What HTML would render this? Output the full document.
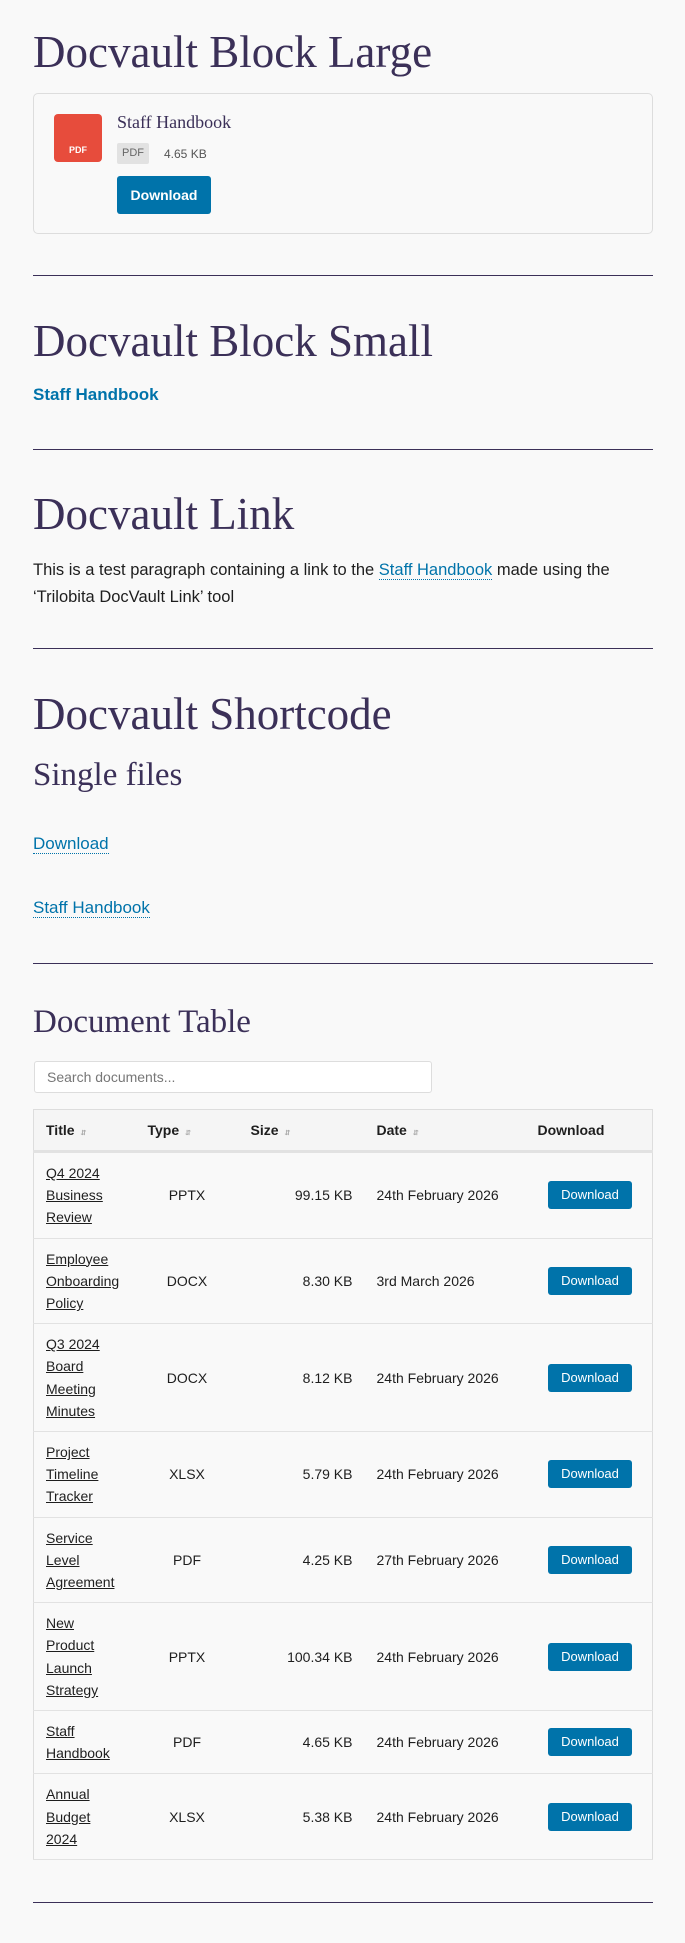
<!DOCTYPE html>
<html><head><meta charset="utf-8"><style>
*{box-sizing:border-box;margin:0;padding:0}
body{width:685px;height:1943px;background:#f9f9f9;position:relative;font-family:"Liberation Sans",sans-serif;color:#1e1e1e;overflow:hidden}
.a{position:absolute}
h1,h2{font-family:"Liberation Serif",serif;font-weight:normal;color:#3b3058;position:absolute;left:33px;white-space:nowrap}
h1{font-size:45px;line-height:50px}
hr{position:absolute;left:33px;width:620px;border:0;border-top:1.5px solid #3b3058}
a{color:#0073aa}
.dl{text-decoration:none;border-bottom:1px dotted #0073aa}
table{border-collapse:collapse;position:absolute;left:33px;top:1109px;width:620px;font-size:14px;border:1px solid #ddd}
th{background:#f5f5f5;text-align:left;font-weight:bold;height:42px;padding:0 12px;border-bottom:3px solid #e2e2e2}
td{padding:9px 12px;line-height:22.2px;border-bottom:1px solid #e2e2e2}
td.t a{color:#1e1e1e;text-decoration:underline}
td.b{text-align:right;padding-right:20px}
.s{font-size:7px;color:#aaa;margin-left:6px}
.btn{display:inline-block;background:#0073aa;color:#fff;border-radius:3px;font-size:13px;width:84px;height:28px;line-height:28px;text-align:center}
</style></head><body>
<h1 style="top:27px">Docvault Block Large</h1>
<div class="a" style="left:33px;top:93px;width:620px;height:141px;border:1px solid #ddd;border-radius:5px"></div>
<div class="a" style="left:54px;top:114px;width:48px;height:48px;background:#e74c3c;border-radius:4px;color:#fff;font-size:9px;font-weight:bold;text-align:center;padding-top:31px">PDF</div>
<div class="a" style="left:117px;top:112px;font-family:'Liberation Serif',serif;font-size:18px;color:#3b3058">Staff Handbook</div>
<div class="a" style="left:117px;top:143px;width:32px;height:21px;background:#e2e2e2;border-radius:2px;font-size:11px;color:#666;text-align:center;line-height:21px">PDF</div>
<div class="a" style="left:164px;top:144px;font-size:12px;color:#555;line-height:20px">4.65 KB</div>
<div class="a" style="left:117px;top:176px;width:94px;height:38px;background:#0073aa;border-radius:3px;color:#fff;font-size:14px;font-weight:bold;text-align:center;line-height:38px">Download</div>
<hr style="top:275px">
<h1 style="top:316px">Docvault Block Small</h1>
<div class="a" style="left:33px;top:385px;font-size:17px;font-weight:bold;color:#0073aa">Staff Handbook</div>
<hr style="top:449px">
<h1 style="top:489px">Docvault Link</h1>
<div class="a" style="left:33px;top:557px;width:620px;font-size:16.5px;line-height:27px">This is a test paragraph containing a link to the <a class="dl">Staff Handbook</a> made using the ‘Trilobita DocVault Link’ tool</div>
<hr style="top:648px">
<h1 style="top:689px">Docvault Shortcode</h1>
<h2 style="top:757px;font-size:33px;line-height:36px">Single files</h2>
<div class="a" style="left:33px;top:834px;font-size:17px"><a class="dl">Download</a></div>
<div class="a" style="left:33px;top:898px;font-size:17px"><a class="dl">Staff Handbook</a></div>
<hr style="top:963px">
<h2 style="top:1004px;font-size:33px;line-height:36px">Document Table</h2>
<div class="a" style="left:34px;top:1061px;width:398px;height:32px;background:#fff;border:1px solid #ddd;border-radius:3px;font-size:14px;color:#777;padding-left:12px;line-height:30px">Search documents...</div>
<table>
<tr><th style="width:102px">Title<span class="s">⇵</span></th><th style="width:103px">Type<span class="s">⇵</span></th><th style="width:126px">Size<span class="s">⇵</span></th><th style="width:150px">Date<span class="s">⇵</span></th><th style="padding-left:23px">Download</th></tr>
<tr><td class="t"><a>Q4 2024 Business Review</a></td><td align="center">PPTX</td><td align="right">99.15 KB</td><td>24th February 2026</td><td class="b"><span class="btn">Download</span></td></tr>
<tr><td class="t"><a>Employee Onboarding Policy</a></td><td align="center">DOCX</td><td align="right">8.30 KB</td><td>3rd March 2026</td><td class="b"><span class="btn">Download</span></td></tr>
<tr><td class="t"><a>Q3 2024 Board Meeting Minutes</a></td><td align="center">DOCX</td><td align="right">8.12 KB</td><td>24th February 2026</td><td class="b"><span class="btn">Download</span></td></tr>
<tr><td class="t"><a>Project Timeline Tracker</a></td><td align="center">XLSX</td><td align="right">5.79 KB</td><td>24th February 2026</td><td class="b"><span class="btn">Download</span></td></tr>
<tr><td class="t"><a>Service Level Agreement</a></td><td align="center">PDF</td><td align="right">4.25 KB</td><td>27th February 2026</td><td class="b"><span class="btn">Download</span></td></tr>
<tr><td class="t"><a>New Product Launch Strategy</a></td><td align="center">PPTX</td><td align="right">100.34 KB</td><td>24th February 2026</td><td class="b"><span class="btn">Download</span></td></tr>
<tr><td class="t"><a>Staff Handbook</a></td><td align="center">PDF</td><td align="right">4.65 KB</td><td>24th February 2026</td><td class="b"><span class="btn">Download</span></td></tr>
<tr><td class="t"><a>Annual Budget 2024</a></td><td align="center">XLSX</td><td align="right">5.38 KB</td><td>24th February 2026</td><td class="b"><span class="btn">Download</span></td></tr>
</table>
<hr style="top:1902px">
</body></html>
